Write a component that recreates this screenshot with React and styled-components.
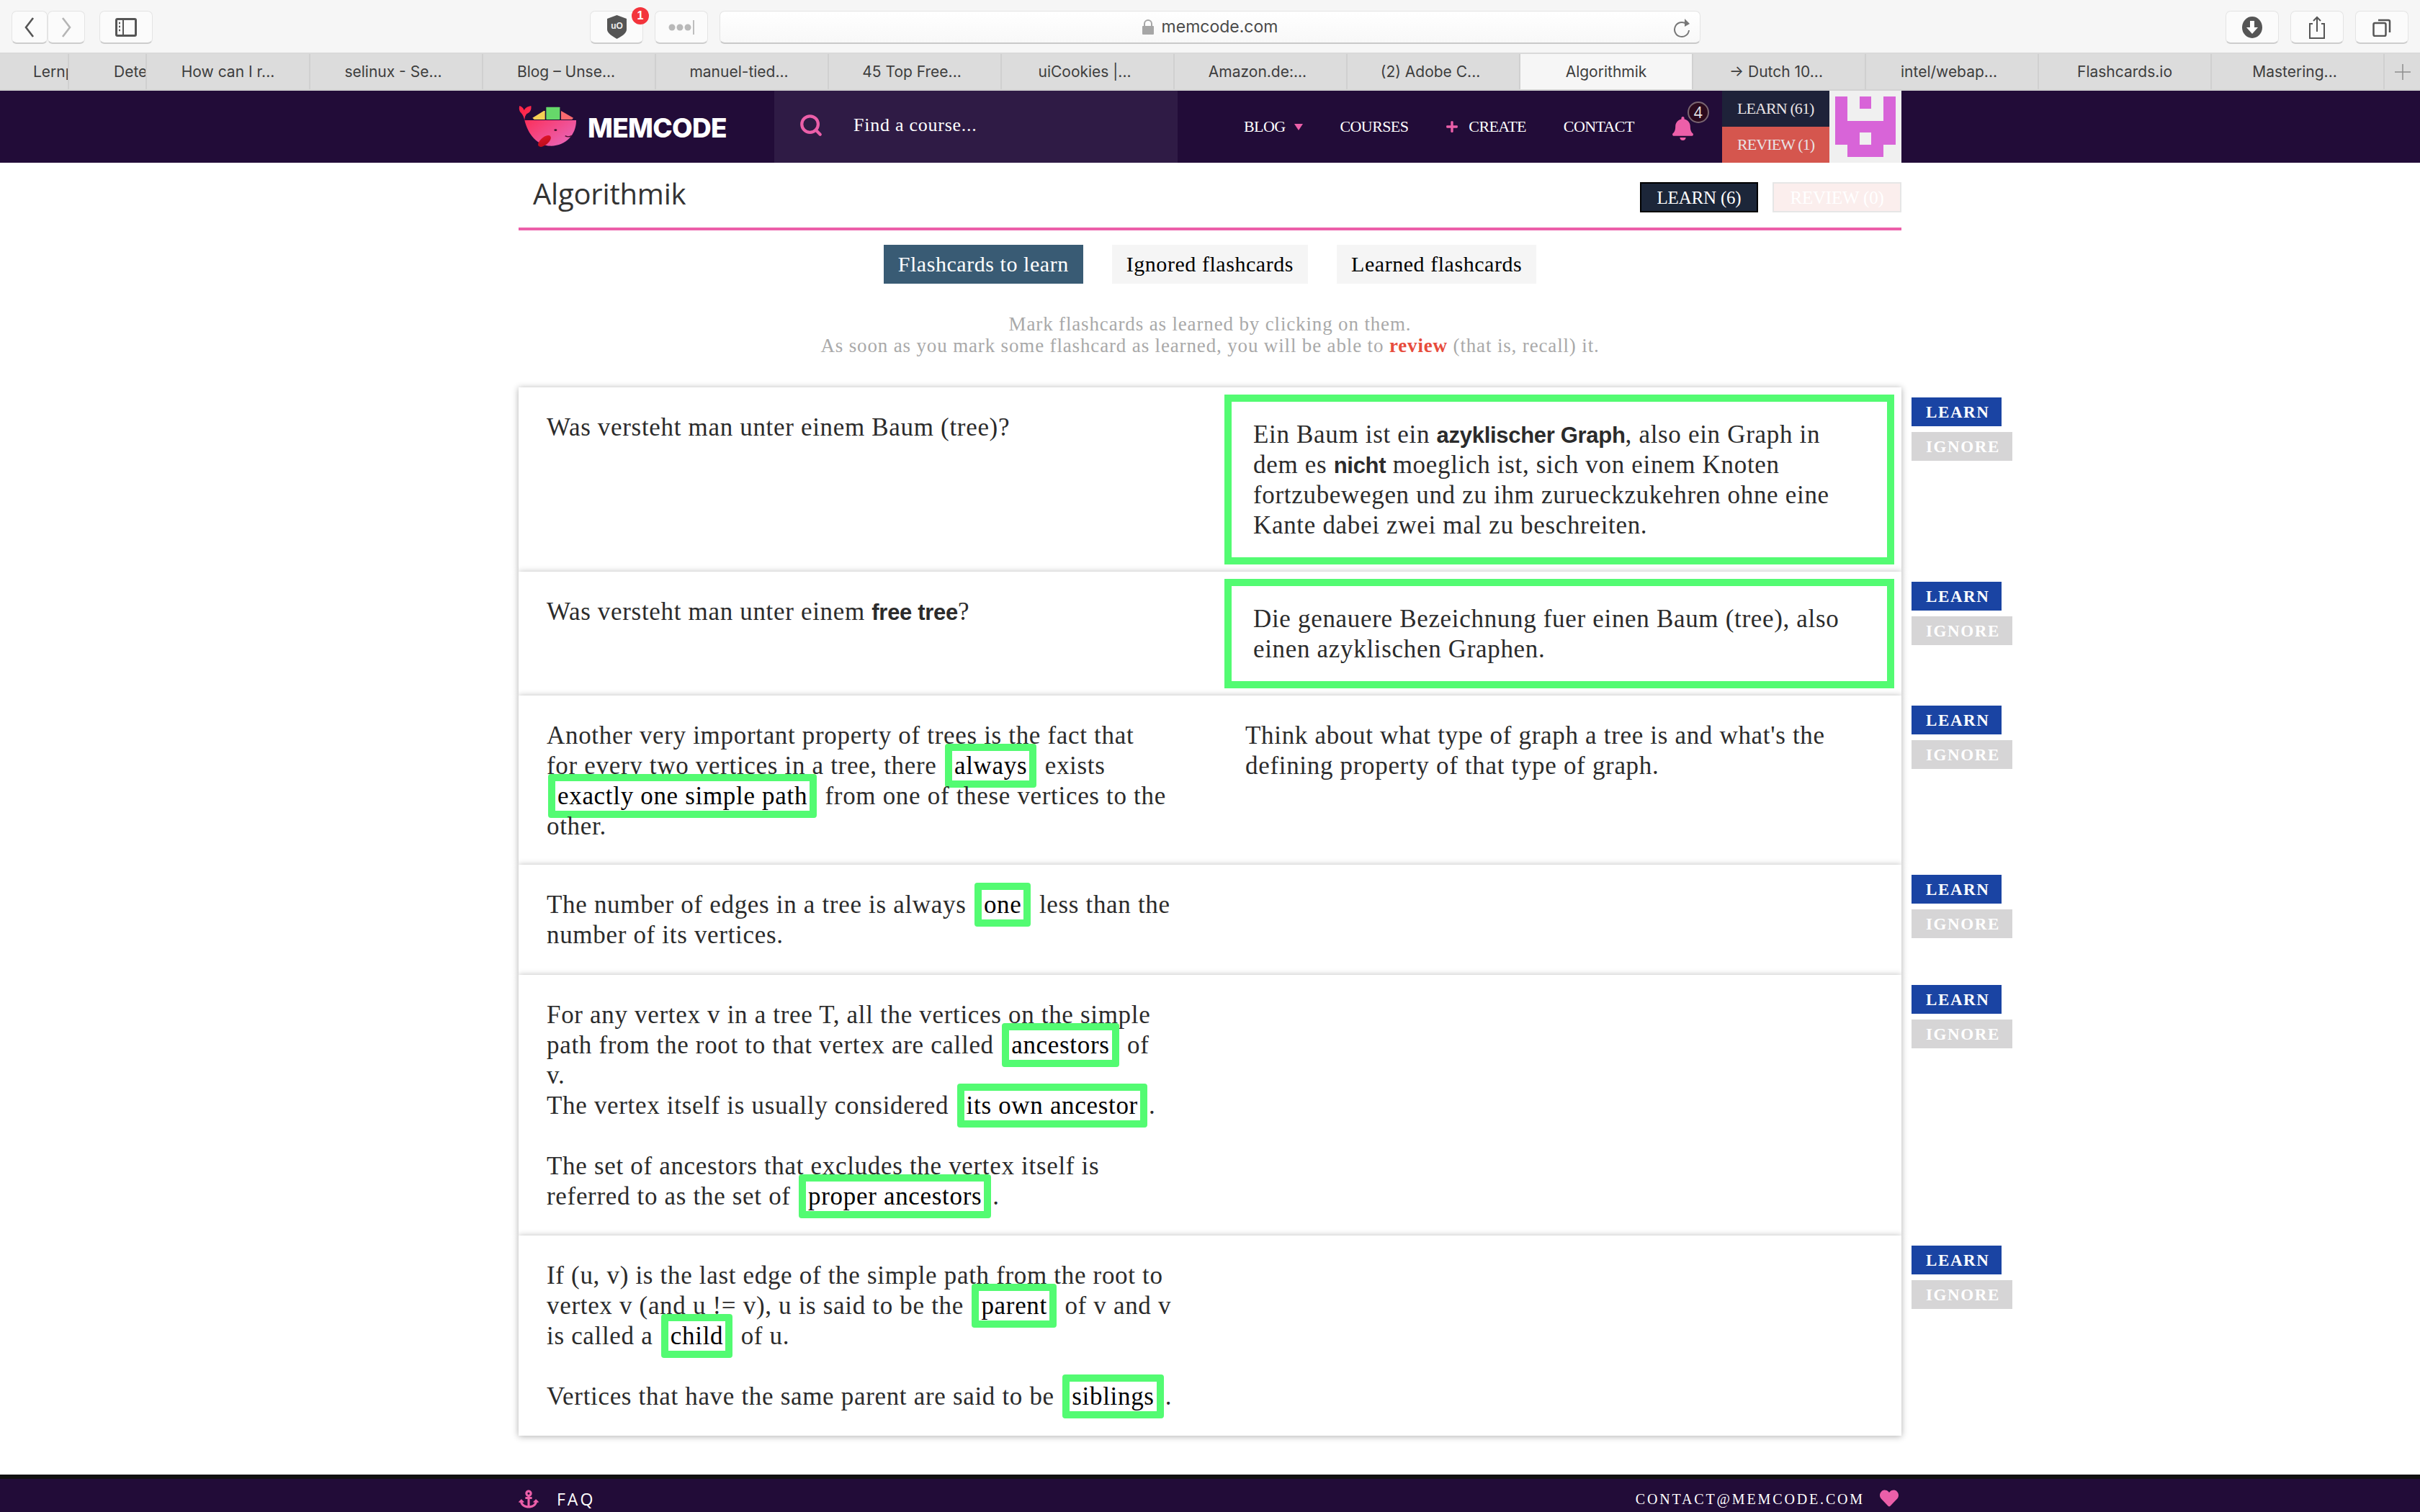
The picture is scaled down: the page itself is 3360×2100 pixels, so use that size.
import React from "react";
import styled, { createGlobalStyle } from "styled-components";
import { Search } from "lucide-react";
import { FaBell, FaAnchor, FaHeart, FaPlus } from "react-icons/fa";

const Global = createGlobalStyle`
  html, body { margin: 0; padding: 0; background: #fff; }
  * { box-sizing: border-box; }
`;
const SERIF = `"Liberation Serif", "Times New Roman", serif`;
const PINK = "#ec5fa9";
const NAVY = "#220c38";

const Page = styled.div`
  width: 3360px; height: 2100px; display: flex; flex-direction: column; overflow: hidden;
  font-family: ${SERIF}; color: #2b2b2b;
`;
const Toolbar = styled.div`
  height: 75px; flex: none; display: flex; align-items: flex-start; padding: 15px 16px 0;
  background: #f6f6f6; border-bottom: 2px solid #d9d9d9;
`;
const ToolBtn = styled.div`
  position: relative; flex: none; height: 46px; width: ${p => p.$w || 74}px; margin-left: ${p => p.$ml || 0}px;
  display: flex; align-items: center; justify-content: center;
  background: #fbfbfb; border: 1px solid #e4e4e4; border-bottom: 2px solid #cdcdcd; border-radius: 7px;
`;
const Badge = styled.span`
  position: absolute; left: 57px; top: -6px; width: 24px; height: 24px; border-radius: 50%;
  background: #f3343c; color: #fff; font: 700 16px/24px "Liberation Sans", sans-serif; text-align: center;
`;
const UrlBar = styled.div`
  position: relative; flex: none; width: 1362px; height: 46px; margin-left: 16px;
  display: flex; align-items: center; justify-content: center; gap: 11px;
  background: linear-gradient(#fff, #f8f8f8); border: 1px solid #e4e4e4; border-bottom: 2px solid #c9c9c9; border-radius: 7px;
  font: 400 23px/1 Inter, "Liberation Sans", sans-serif; color: #4a4a4a;
`;
const Reload = styled.svg`
  position: absolute; right: 12px; top: 9px;
`;
const TabStrip = styled.div`
  height: 51px; flex: none; display: flex; background: #dcdcdc; border-bottom: 2px solid #d2d2d2;
`;
const Tab = styled.div`
  flex: none; width: ${p => p.$w}px; height: 49px; overflow: hidden; white-space: nowrap;
  display: flex; align-items: center; justify-content: ${p => (p.$pl ? "flex-start" : "center")};
  padding-left: ${p => p.$pl || 0}px; padding-right: ${p => (p.$trim ? 8 : 0)}px;
  background: ${p => (p.$active ? "#f6f6f6" : "#dcdcdc")};
  border-right: 2px solid #d0d0d0;
  font: 400 21px/1 Inter, "Liberation Sans", sans-serif; color: #3e3e3e;
`;
const AddTab = styled.div`
  flex: 1; display: flex; align-items: center; justify-content: center; color: #8a8a8a;
`;
const NavBar = styled.div`
  height: 100px; flex: none; background: ${NAVY};
`;
const Inner = styled.div`
  width: 1920px; margin: 0 auto; display: flex; height: 100%;
`;
const LogoWrap = styled.div`
  width: 355px; flex: none; display: flex; align-items: center; gap: 16px;
`;
const LogoText = styled.span`
  font: 800 37px/1 Inter, "Liberation Sans", sans-serif; color: #fff; letter-spacing: -0.7px; padding-top: 2px;
`;
const SearchBox = styled.div`
  width: 560px; flex: none; background: #2f1b45; display: flex; align-items: center; gap: 42px; padding: 0 0 4px 34px;
  color: #fff; font: 400 26px/1 ${SERIF}; letter-spacing: .75px;
`;
const NavLinks = styled.div`
  display: flex; align-items: center; gap: 52px; padding-left: 92px; flex: 1;
`;
const NavLink = styled.span`
  display: flex; align-items: center; gap: ${p => p.$gap || 12}px; color: #fff; font: 400 22px/1 ${SERIF}; letter-spacing: -.6px;
`;
const Caret = styled.i`
  width: 0; height: 0; border-left: 6px solid transparent; border-right: 6px solid transparent; border-top: 9px solid ${PINK};
`;
const Bell = styled.div`
  position: relative; width: 30px; height: 33px; margin: 5px 0 0 -1px; color: ${PINK};
`;
const BellCount = styled.span`
  position: absolute; left: 23px; top: -21px; width: 30px; height: 30px; border-radius: 50%;
  background: #2c0a1e; border: 2px solid #7a6671; color: #e6e3e6;
  font: 400 21px/26px "Open Sans", sans-serif; text-align: center;
`;
const Stack = styled.div`
  width: 149px; flex: none; display: flex; flex-direction: column;
`;
const StackItem = styled.div`
  height: 50px; display: flex; align-items: center; padding-left: 21px; color: #e9e4e6; white-space: nowrap;
  background: ${p => p.$bg}; font: 400 22px/1 ${SERIF}; letter-spacing: -.9px;
`;
const Avatar = styled.div`
  width: 100px; flex: none; background: #f0f0f0; display: flex; align-items: center; justify-content: center;
`;
const Main = styled.div`
  width: 1920px; margin: 0 auto; flex: none;
`;
const Header = styled.div`
  height: 94px; display: flex; align-items: flex-start; border-bottom: 4px solid ${PINK};
  padding: 27px 0 0 20px;
`;
const Title = styled.h1`
  margin: -4px 0 0; flex: 1; font: 400 40px/1 "Open Sans", sans-serif; color: #333; letter-spacing: -.2px;
`;
const HeadBtn = styled.div`
  height: 42px; margin-left: ${p => p.$ml || 0}px; display: flex; align-items: center; justify-content: center;
  width: ${p => p.$w}px; color: #fff; font: 400 25px/1 ${SERIF}; letter-spacing: -.2px;
  background: ${p => p.$bg}; border: 2px solid ${p => p.$line};
`;
const Tabs = styled.div`
  display: flex; justify-content: center; gap: 40px; margin-top: 20px;
`;
const Pill = styled.div`
  height: 54px; padding: 0 20px; display: flex; align-items: center; font: 400 30px/1 ${SERIF}; letter-spacing: .55px;
  background: ${p => (p.$on ? "#395b74" : "#f5f5f5")}; color: ${p => (p.$on ? "#fff" : "#000")};
`;
const Help = styled.div`
  margin: 41px 0 43px; text-align: center; font: 400 27px/30px ${SERIF}; color: #a9a9a9; letter-spacing: .85px;
  b { color: #e74c3c; font-weight: 700; }
`;
const RowWrap = styled.div`
  display: flex; width: 1920px;
`;
const Card = styled.div`
  flex: none; width: 1920px; height: ${p => p.$h}px; background: #fff; display: grid; grid-template-columns: 960px 960px;
  box-shadow: 0 1px 9px rgba(0,0,0,.32);
  font-size: 35px; line-height: 42px; letter-spacing: .68px; color: #2b2b2b;
`;
const Side = styled.div`
  padding: 35px 0 0 ${p => p.$pl || 39}px; white-space: nowrap;
`;
const Answer = styled.div`
  margin: 10px 10px 0 20px; height: ${p => p.$h}px; border: 10px solid #53fb72; padding: 25px 0 0 30px; white-space: nowrap;
`;
const Bold = styled.b`
  font-family: "Liberation Sans", Arial, sans-serif; font-weight: 700; font-size: 31px; line-height: 1; letter-spacing: -.3px;
`;
const Cloze = styled.span`
  background: #fff; color: #000; border: 10px solid #53fb72; border-radius: 4px; padding: 1px 3px; margin: 0 2px;
`;
const Actions = styled.div`
  flex: none; width: 0; padding: 14px 0 0 14px; display: flex; flex-direction: column; gap: 8px; align-items: flex-start;
`;
const ActBtn = styled.div`
  height: 40px; width: ${p => p.$w}px; padding-left: 20px; flex: none; display: flex; align-items: center;
  background: ${p => p.$bg}; color: #fff; font: 700 23px/1 ${SERIF}; letter-spacing: 1.6px;
`;
const Footer = styled.div`
  margin-top: auto; height: 52px; flex: none; background: ${NAVY}; border-top: 6px solid #111;
`;
const FootInner = styled.div`
  width: 1920px; margin: 0 auto; height: 100%; padding-top: 10px; display: flex; align-items: center; justify-content: space-between; color: #fff;
`;
const Faq = styled.div`
  display: flex; align-items: center; gap: 25px; font: 400 23px/1 "Open Sans", sans-serif; letter-spacing: 3px;
  svg { color: ${PINK}; }
`;
const Mail = styled.div`
  display: flex; align-items: center; gap: 21px; padding-right: 4px; font: 400 20px/1 ${SERIF}; letter-spacing: 2.85px;
  svg { color: ${PINK}; margin-top: -3px; }
`;

const Ic = ({ w, h, children, ...r }) => (
  <svg width={w} height={h} viewBox={`0 0 ${w} ${h}`} fill="none" {...r}>{children}</svg>
);

const Logo = () => (
  <svg width="80" height="60" viewBox="0 0 240 180">
    <defs>
      <linearGradient id="whale" x1="0.1" y1="0.1" x2="0.9" y2="0.9">
        <stop offset="0" stopColor="#ff2649" />
        <stop offset="1" stopColor="#e964b6" />
      </linearGradient>
      <linearGradient id="tongue" x1="0" y1="1" x2="1" y2="0">
        <stop offset="0" stopColor="#b50b18" />
        <stop offset="1" stopColor="#e3162a" />
      </linearGradient>
    </defs>
    <path d="M25 63H240C241 120 200 170 135 170C80 170 40 125 25 63C22 50 18 40 11 33C4 28 0 15 4 3C14 6 21 14 23 22C27 12 36 6 52 3C55 20 46 32 34 36C29 42 25 50 25 63Z" fill="url(#whale)" />
    <path d="M58 53L105 24H110V60H65Z" fill="#f5d054" />
    <rect x="115" y="8" width="57" height="52" rx="2" fill="#66d86a" />
    <path d="M177 24L228 53L223 60H177Z" fill="#fb6a6f" />
    <ellipse cx="154" cy="104" rx="6" ry="4" fill="#4a1030" />
    <path d="M194 128C202 133 212 133 222 127" stroke="#4a1030" strokeWidth="4" fill="none" />
    <ellipse cx="108" cy="150" rx="32" ry="16" transform="rotate(-40 108 150)" fill="url(#tongue)" />
  </svg>
);

const PIXELS = ["10101", "10001", "11111", "11011", "01110"];
const Identicon = () => (
  <svg width="84" height="84" viewBox="0 0 5 5" shapeRendering="crispEdges">
    {PIXELS.flatMap((r, y) => [...r].map((c, x) => (c === "1" ? <rect key={`${x}-${y}`} x={x} y={y} width="1" height="1" fill="#d864d8" /> : null)))}
  </svg>
);

const TABS = [
  ["Lernp", 96, 46], ["Dete", 108, 62], ["How can I r...", 227], ["selinux - Se...", 240], ["Blog – Unse...", 240],
  ["manuel-tied...", 240], ["45 Top Free...", 240], ["uiCookies |...", 240], ["Amazon.de:...", 240], ["(2) Adobe C...", 240],
  ["Algorithmik", 240, 0, true], ["→ Dutch 10...", 240], ["intel/webap...", 240], ["Flashcards.io", 240], ["Mastering...", 240],
];

const Row = ({ h, children }) => (
  <RowWrap>
    <Card $h={h}>{children}</Card>
    <Actions>
      <ActBtn $bg="#1a44a3" $w={125}>LEARN</ActBtn>
      <ActBtn $bg="#d6d5d6" $w={140}>IGNORE</ActBtn>
    </Actions>
  </RowWrap>
);

export default function App() {
  return (
    <Page>
      <Global />
      <Toolbar>
        <ToolBtn $w={50}>
          <Ic w={16} h={30}><path d="M13 2L3 15l10 13" stroke="#555" strokeWidth="2.6" /></Ic>
        </ToolBtn>
        <ToolBtn $w={52}>
          <Ic w={16} h={30}><path d="M3 2l10 13L3 28" stroke="#b5b5b5" strokeWidth="2.6" /></Ic>
        </ToolBtn>
        <ToolBtn $w={74} $ml={20}>
          <Ic w={30} h={26}>
            <rect x="1.5" y="1.5" width="27" height="23" rx="1.5" stroke="#555" strokeWidth="3" />
            <path d="M11 2v22" stroke="#555" strokeWidth="2" />
            <path d="M5 7h2M5 12h2M5 17h2" stroke="#555" strokeWidth="2.5" />
          </Ic>
        </ToolBtn>
        <ToolBtn $w={74} $ml={607}>
          <Ic w={27} h={33}>
            <path d="M13.5 0L27 5v15c0 5-6 9-13.500 13C7 29 0 25 0 20V5z" fill="#555" />
            <text x="13.500" y="19" textAnchor="middle" fontFamily="Liberation Sans" fontWeight="700" fontSize="12" fill="#eee">uO</text>
          </Ic>
          <Badge>1</Badge>
        </ToolBtn>
        <ToolBtn $w={74} $ml={16}>
          <Ic w={36} h={22}>
            <circle cx="5" cy="11" r="4.500" fill="#b9b9b9" />
            <circle cx="16" cy="11" r="4.500" fill="#b9b9b9" />
            <circle cx="27" cy="11" r="4.500" fill="#b9b9b9" />
            <path d="M35 1v20" stroke="#aaa" strokeWidth="1.500" />
          </Ic>
        </ToolBtn>
        <UrlBar>
          <Ic w={16} h={21}>
            <path d="M3 10V6a5 5 0 0 1 10 0v4" stroke="#a6a6a6" strokeWidth="2" />
            <rect y="9" width="16" height="12" rx="1" fill="#a6a6a6" />
          </Ic>
          memcode.com
          <Reload width="24" height="28" viewBox="0 0 24 28" fill="none">
            <path d="M17 8A10 10 0 1 0 21 17" stroke="#777" strokeWidth="2" />
            <path d="M15 1l7 7-7 4z" fill="#777" />
          </Reload>
        </UrlBar>
        <ToolBtn $w={74} $ml={729}>
          <Ic w={28} h={30}>
            <ellipse cx="14" cy="15" rx="14" ry="15" fill="#555" />
            <path d="M11 6h6v9h5l-8 9-8-9h5z" fill="#fff" />
          </Ic>
        </ToolBtn>
        <ToolBtn $w={74} $ml={16}>
          <Ic w={24} h={32}>
            <path d="M6 11H2v20h20V11h-4" stroke="#555" strokeWidth="2" />
            <path d="M12 22V2M7 7l5-5 5 5" stroke="#555" strokeWidth="2" />
          </Ic>
        </ToolBtn>
        <ToolBtn $w={74} $ml={16}>
          <Ic w={26} h={26}>
            <rect x="1.500" y="7" width="17" height="18" rx="2" stroke="#555" strokeWidth="2.500" />
            <path d="M8 3h14a2 2 0 0 1 2 2v15" stroke="#555" strokeWidth="2.500" />
          </Ic>
        </ToolBtn>
      </Toolbar>
      <TabStrip>
        {TABS.map(([t, w, pl, active]) => (
          <Tab key={t} $w={w} $pl={pl} $active={active} $trim={w === 240 && t.endsWith("...")}>{t}</Tab>
        ))}
        <AddTab>
          <Ic w={22} h={22}><path d="M11 0v22M0 11h22" stroke="#8d8d8d" strokeWidth="1.500" /></Ic>
        </AddTab>
      </TabStrip>
      <NavBar>
        <Inner>
          <LogoWrap><Logo /><LogoText>MEMCODE</LogoText></LogoWrap>
          <SearchBox>
            <Search size={34} color={PINK} strokeWidth={3} />
            Find a course...
          </SearchBox>
          <NavLinks>
            <NavLink>BLOG <Caret /></NavLink>
            <NavLink>COURSES</NavLink>
            <NavLink $gap={14}><FaPlus size={18} color={PINK} />CREATE</NavLink>
            <NavLink>CONTACT</NavLink>
            <Bell>
              <FaBell size={33} />
              <BellCount>4</BellCount>
            </Bell>
          </NavLinks>
          <Stack>
            <StackItem $bg="#1e2239">LEARN (61)</StackItem>
            <StackItem $bg="#d5564e">REVIEW (1)</StackItem>
          </Stack>
          <Avatar><Identicon /></Avatar>
        </Inner>
      </NavBar>
      <Main>
        <Header>
          <Title>Algorithmik</Title>
          <HeadBtn $w={164} $bg="#1c2639" $line="#000">LEARN (6)</HeadBtn>
          <HeadBtn $w={179} $ml={20} $bg="#fbeeed" $line="#e6e6e6">REVIEW (0)</HeadBtn>
        </Header>
        <Tabs>
          <Pill $on>Flashcards to learn</Pill>
          <Pill>Ignored flashcards</Pill>
          <Pill>Learned flashcards</Pill>
        </Tabs>
        <Help>
          Mark flashcards as learned by clicking on them.<br />
          As soon as you mark some flashcard as learned, you will be able to <b>review</b> (that is, recall) it.
        </Help>
        <Row h={256}>
          <Side>Was versteht man unter einem Baum (tree)?</Side>
          <Answer $h={236}>
            Ein Baum ist ein <Bold>azyklischer Graph</Bold>, also ein Graph in<br />
            dem es <Bold>nicht</Bold> moeglich ist, sich von einem Knoten<br />
            fortzubewegen und zu ihm zurueckzukehren ohne eine<br />
            Kante dabei zwei mal zu beschreiten.
          </Answer>
        </Row>
        <Row h={172}>
          <Side>Was versteht man unter einem <Bold>free tree</Bold>?</Side>
          <Answer $h={152}>
            Die genauere Bezeichnung fuer einen Baum (tree), also<br />
            einen azyklischen Graphen.
          </Answer>
        </Row>
        <Row h={235}>
          <Side>
            Another very important property of trees is the fact that<br />
            for every two vertices in a tree, there <Cloze>always</Cloze> exists<br />
            <Cloze>exactly one simple path</Cloze> from one of these vertices to the<br />
            other.
          </Side>
          <Side $pl={49}>
            Think about what type of graph a tree is and what's the<br />
            defining property of that type of graph.
          </Side>
        </Row>
        <Row h={153}>
          <Side>
            The number of edges in a tree is always <Cloze>one</Cloze> less than the<br />
            number of its vertices.
          </Side>
          <div />
        </Row>
        <Row h={362}>
          <Side>
            For any vertex v in a tree T, all the vertices on the simple<br />
            path from the root to that vertex are called <Cloze>ancestors</Cloze> of<br />
            v.<br />
            The vertex itself is usually considered <Cloze>its own ancestor</Cloze>.<br />
            <br />
            The set of ancestors that excludes the vertex itself is<br />
            referred to as the set of <Cloze>proper ancestors</Cloze>.
          </Side>
          <div />
        </Row>
        <Row h={278}>
          <Side>
            If (u, v) is the last edge of the simple path from the root to<br />
            vertex v (and u != v), u is said to be the <Cloze>parent</Cloze> of v and v<br />
            is called a <Cloze>child</Cloze> of u.<br />
            <br />
            Vertices that have the same parent are said to be <Cloze>siblings</Cloze>.
          </Side>
          <div />
        </Row>
      </Main>
      <Footer>
        <FootInner>
          <Faq><FaAnchor size={28} />FAQ</Faq>
          <Mail>CONTACT@MEMCODE.COM<FaHeart size={26} /></Mail>
        </FootInner>
      </Footer>
    </Page>
  );
}
